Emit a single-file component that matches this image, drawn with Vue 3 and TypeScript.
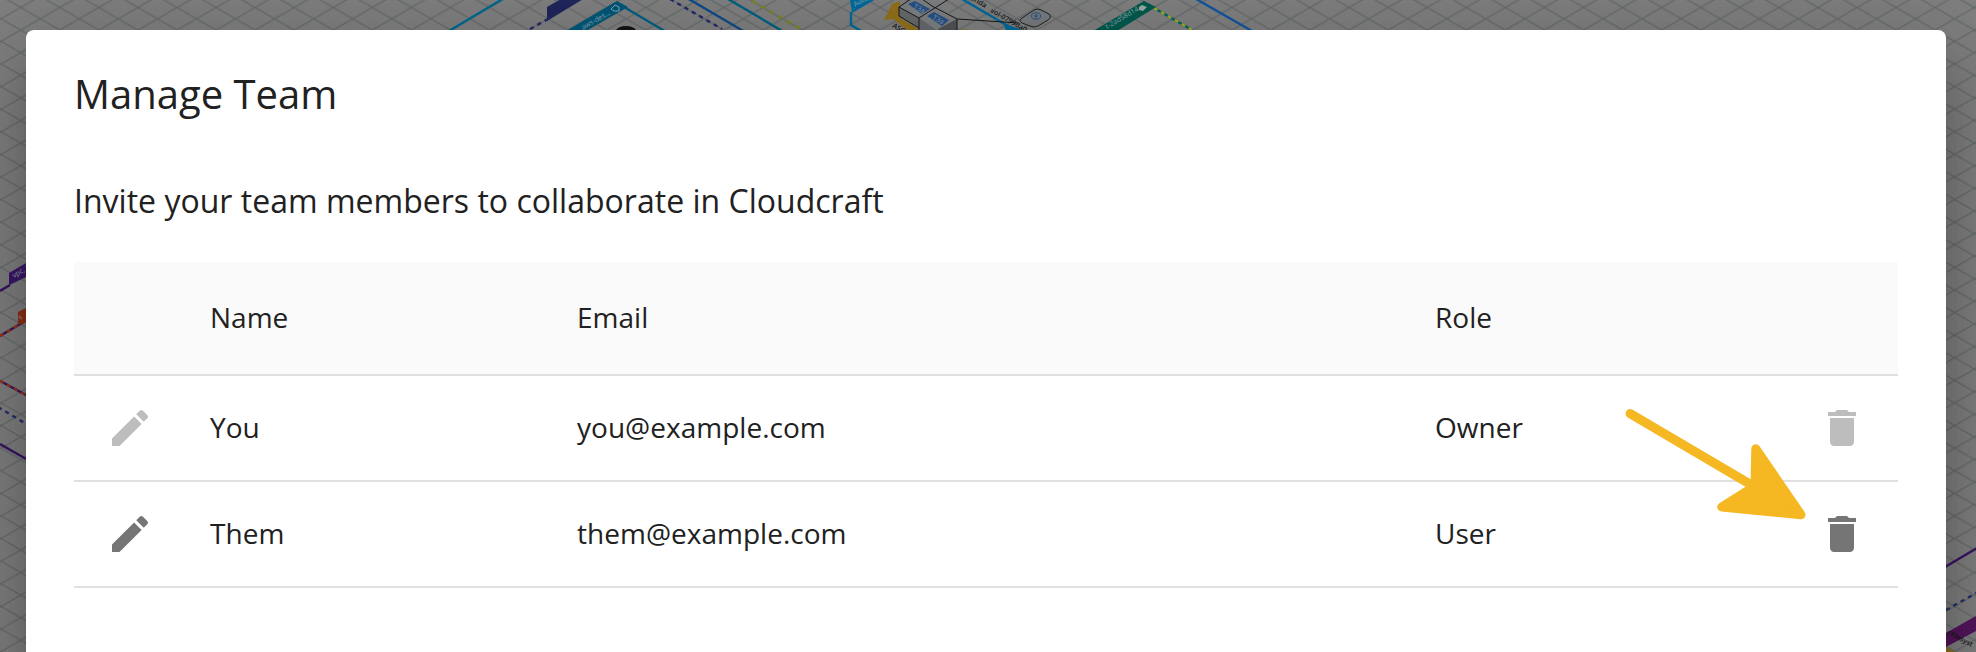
<script setup lang="ts">
interface Member {
  name: string
  email: string
  role: string
  editable: boolean
}

const members: Member[] = [
  { name: 'You', email: 'you@example.com', role: 'Owner', editable: false },
  { name: 'Them', email: 'them@example.com', role: 'User', editable: true },
]
</script>

<template>
  <div class="screen">
    <svg class="canvas" viewBox="0 0 1976 652" aria-hidden="true">
      <defs>
        <pattern id="iso" width="39.07" height="22.6" patternUnits="userSpaceOnUse" x="20.7" y="7.5">
          <path d="M-1-.58 40.07 23.18M-1 23.18 40.07-.58" stroke="#656a6a" stroke-width="1.2" fill="none" />
        </pattern>
      </defs>
      <rect width="1976" height="652" fill="url(#iso)" />
      <g fill="none" stroke-width="2.4">
        <path d="M449 31 506-3" stroke="#00688f" />
        <path d="M624 7 668 33M728-1 784 32" stroke="#006081" />
        <path d="M687-2 745 32" stroke="#0f4c86" />
        <path d="M530 29 548 19M670-1 722 29" stroke="#24296a" stroke-dasharray="4.2 4.2" />
        <path d="M752 1 806 32" stroke="#7a861e" stroke-dasharray="5 5" />
        <path d="M851 12V25L863 32M962-1 1018 32" stroke="#00699b" />
        <path d="M1154 8 1192 30" stroke="#00685b" />
        <path d="M1154 8 1192 30" stroke="#a4a72c" stroke-dasharray="4 4" />
        <path d="M1196-1 1252 31" stroke="#1256a0" />
        <path d="M0 291 10 285M0 444 28 460" stroke="#391564" />
        <path d="M0 336 27 320M0 381 28 396" stroke="#391564" />
        <path d="M0 336 27 320M0 381 28 396" stroke="#9c3416" stroke-dasharray="4 4" />
        <path d="M-2 407 28 425" stroke="#24306a" stroke-dasharray="4.2 4.2" />
        <path d="M1945 567 1977 548" stroke="#391564" />
        <path d="M1946 610 1978 592" stroke="#24306a" stroke-dasharray="4.2 4.2" />
      </g>
      <path d="M547 21V7L561-1H583Z" fill="#20265c" />
      <path d="M566 31 617 1 628 7 586 31Z" fill="#005779" />
      <path d="M850-1H876L852 13Z" fill="#006a9c" />
      <text class="tag" transform="translate(583 30) rotate(-30)">aws-des...</text>
      <path d="M611 9 615 5 619 7 619 11 614 11Z" fill="none" stroke="#83a2ac" />
      <ellipse cx="626" cy="31" rx="10" ry="5" fill="#151515" />
      <text class="tag" transform="translate(855 7) rotate(-30)">Auto</text>
      <path d="M884 20 892 4 900 1 900 18 920 30H907L893 19ZM958 29 964 30H974Z" fill="#91701b" />
      <path d="M899 7 911-1H932L957 19V32H926L899 16Z" fill="#7b7f81" />
      <path d="M899 7 919 18V28L899 16ZM919 18 938 31H919Z" fill="#66696b" />
      <path d="M938 29 957 19V32H938Z" fill="#505355" />
      <g stroke="#181818" stroke-width="1" fill="none">
        <path d="M899 16V7L911-1M932 6 957 19V32M899 16 919 28" />
        <path d="M919 18 949-1M899 7 919 18V31M957 19 1019 23M922-1 932 6" />
      </g>
      <path d="M908 4 915 1 930 9 922 14ZM927 16 934 12 949 20 942 26Z" fill="#285184" />
      <text class="chip" transform="translate(913 8) rotate(28)">T3a</text>
      <text class="chip" transform="translate(932 19) rotate(28)">T3a</text>
      <text class="label" transform="translate(892 27) rotate(30)">ASG-1</text>
      <text class="label" transform="translate(971 0) rotate(30)">trida</text>
      <text class="label" transform="translate(990 12) rotate(30)">vol-0799da0c8f</text>
      <path d="M1003 23 1022 30H1006Z" fill="#00699b" />
      <path d="M1022 18 1034 10Q1037 8 1041 10L1049 14Q1052 17 1048 20L1038 26Q1035 28 1030 26L1022 23Q1018 20 1022 18Z" fill="#777b7d" stroke="#202020" />
      <ellipse cx="1036" cy="16" rx="4.5" ry="3.2" fill="none" stroke="#285184" />
      <path d="M1034 16H1038M1036 14V18" stroke="#285184" />
      <path d="M1093 31 1144 1 1156 7 1117 31Z" fill="#00594d" />
      <text class="tag" transform="translate(1107 29) rotate(-30)">t-2ad58d14</text>
      <path d="M1139 7 1142 5 1147 7 1143 11 1139 10Z" fill="#95aaa5" />
      <path d="M9 273 26 263V277L9 285Z" fill="#3c1769" />
      <text class="tag" transform="translate(14 278) rotate(-30)">vpc, 1</text>
      <path d="M18 312 26 308V322L18 325Z" fill="#8d3015" />
      <text class="tag" transform="translate(20 320) rotate(-30)">s</text>
      <path d="M1946 633 1976 616V631L1946 647Z" fill="#53155c" />
      <path d="M1946 647 1955 652H1946Z" fill="#91701b" />
      <text class="label" transform="translate(1947 634) rotate(28)">cfilesyst</text>
    </svg>

    <main class="dialog">
      <h1>Manage Team</h1>
      <p class="intro">Invite your team members to collaborate in Cloudcraft</p>
      <div class="table">
        <div class="row head">
          <span></span><span>Name</span><span>Email</span><span>Role</span><span></span>
        </div>
        <div v-for="member in members" :key="member.email" class="row">
          <svg class="icon" :class="{ disabled: !member.editable }" viewBox="0 0 24 24">
            <path d="M3 17.25V21h3.75L17.81 9.94l-3.75-3.75L3 17.25zM20.71 7.04c.39-.39.39-1.02 0-1.41l-2.34-2.34c-.39-.39-1.02-.39-1.41 0l-1.83 1.83 3.75 3.75 1.83-1.83z" />
          </svg>
          <span>{{ member.name }}</span>
          <span>{{ member.email }}</span>
          <span>{{ member.role }}</span>
          <svg class="icon" :class="{ disabled: !member.editable }" viewBox="0 0 24 24">
            <path d="M6 19c0 1.1.9 2 2 2h8c1.1 0 2-.9 2-2V7H6v12zM19 4h-3.5l-1-1h-5l-1 1H5v2h14V4z" />
          </svg>
        </div>
      </div>
    </main>

    <svg class="pointer" viewBox="1620 400 200 130" aria-hidden="true">
      <path d="M1630 413.5 1760 490" />
      <path class="tip" d="M1755.8 448.7 1801 514.7 1721.7 507 1755 486Z" />
    </svg>
  </div>
</template>

<style>
body {
  margin: 0;
  overflow: hidden;
}
</style>

<style scoped>
.screen {
  position: relative;
  box-sizing: border-box;
  width: 1976px;
  height: 652px;
  padding: 30px 30px 0 26px;
  overflow: hidden;
  background: #7f7f7f;
  color: #212121;
  font-family: "Open Sans", sans-serif;
}
.canvas {
  position: absolute;
  inset: 0;
  width: 1976px;
  height: 652px;
}
.tag {
  font-size: 7px;
  fill: #8fa4aa;
}
.chip {
  font-size: 7px;
  fill: #8798aa;
}
.label {
  font-size: 7px;
  font-weight: 600;
  fill: #171717;
}
.dialog {
  position: relative;
  box-sizing: border-box;
  height: 900px;
  padding: 37px 48px 0;
  border-radius: 8px;
  background: #fff;
  box-shadow: 0 22px 30px -14px rgba(0, 0, 0, 0.2), 0 48px 76px 6px rgba(0, 0, 0, 0.14),
    0 18px 92px 16px rgba(0, 0, 0, 0.12);
}
h1 {
  margin: 0;
  font-size: 40px;
  font-weight: 400;
  line-height: 54px;
}
.intro {
  margin: 56px 0 37px;
  font-size: 32px;
  line-height: 48px;
  letter-spacing: 0.012px;
}
.table {
  font-size: 28px;
  letter-spacing: 0.02px;
}
.row {
  display: grid;
  grid-template-columns: 136px 367px 858px 383px 80px;
  align-items: center;
  height: 104px;
  border-bottom: 2px solid #e0e0e0;
}
.row > span {
  padding-bottom: 2px;
}
.head {
  height: 112px;
  background: #fafafa;
}
.icon {
  width: 48px;
  height: 48px;
  fill: #757575;
}
.icon:first-child {
  margin-left: 32px;
}
.icon.disabled {
  fill: #bdbdbd;
}
.pointer {
  position: absolute;
  left: 1620px;
  top: 400px;
  width: 200px;
  height: 130px;
  fill: none;
  stroke: #f5b722;
  stroke-width: 9;
  stroke-linecap: round;
  stroke-linejoin: round;
}
.tip {
  fill: #f5b722;
}
</style>
